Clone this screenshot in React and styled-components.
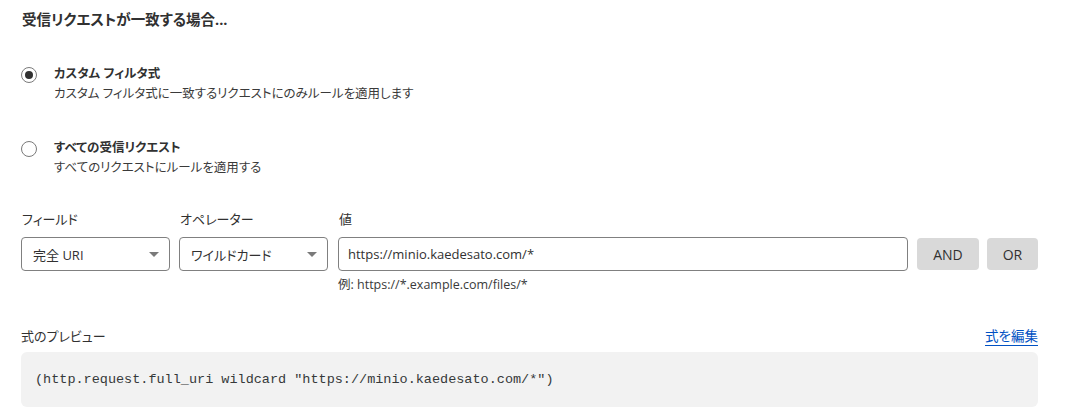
import React from 'react';
import styled, { createGlobalStyle } from 'styled-components';

const GlobalStyle = createGlobalStyle`
    body {
        margin: 0;
        background: #ffffff;
        font-family: "Open Sans", "Noto Sans CJK JP", sans-serif;
        color: #313131;
    }
`;

const Page = styled.div`
    padding: 10px 40px 0 21px;
    font-feature-settings: "palt";
`;

const Title = styled.h2`
    margin: 0 0 0 1px;
    font-size: 14.5px;
    line-height: 20px;
    font-weight: 700;
    color: #313131;
`;

const RadioList = styled.div`
    display: flex;
    flex-direction: column;
    gap: 34px;
    margin-top: 34px;
`;

const RadioRow = styled.label`
    display: flex;
    gap: 17px;
    cursor: pointer;
`;

const RadioCircle = styled.span`
    flex: none;
    width: 16px;
    height: 16px;
    margin-top: 3px;
    box-sizing: border-box;
    border: 1px solid #7a7a7a;
    border-radius: 50%;
    display: flex;
    align-items: center;
    justify-content: center;
    &::after {
        content: "";
        width: 8px;
        height: 8px;
        border-radius: 50%;
        background: ${p => (p.checked ? '#313131' : 'transparent')};
    }
`;

const RadioText = styled.div`
    display: flex;
    flex-direction: column;
`;

const RadioLabel = styled.span`
    font-size: 12.5px;
    line-height: 20px;
    font-weight: 700;
`;

const RadioDesc = styled.span`
    font-size: 12.5px;
    line-height: 20px;
    color: #3a3a3a;
`;

const FieldRow = styled.div`
    display: flex;
    align-items: flex-start;
    margin-top: 31px;
`;

const FieldCol = styled.div`
    display: flex;
    flex-direction: column;
    width: ${p => p.width}px;
    margin-right: ${p => p.gap || 0}px;
`;

const FieldLabel = styled.span`
    font-size: 13px;
    line-height: 20px;
    margin: 0 0 8px 1px;
`;

const SelectBox = styled.div`
    height: 34px;
    box-sizing: border-box;
    border: 1px solid #808080;
    border-radius: 4px;
    display: flex;
    align-items: center;
    justify-content: space-between;
    padding: 0 10px 0 11px;
    font-size: 13px;
    background: #fff;
    &::after {
        content: "";
        border-left: 5px solid transparent;
        border-right: 5px solid transparent;
        border-top: 5px solid #7a7a7a;
    }
`;

const TextInput = styled.div`
    height: 34px;
    box-sizing: border-box;
    border: 1px solid #808080;
    border-radius: 4px;
    display: flex;
    align-items: center;
    padding: 0 9px;
    font-size: 13px;
`;

const Hint = styled.span`
    font-size: 12.5px;
    line-height: 20px;
    margin-top: 4px;
    color: #3a3a3a;
`;

const ButtonGroup = styled.div`
    display: flex;
    gap: 8px;
    margin: 29px 0 0 9px;
`;

const OpButton = styled.button`
    width: ${p => p.width}px;
    height: 32px;
    padding: 0;
    border: 0;
    border-radius: 4px;
    background: #d9d9d9;
    color: #313131;
    font-family: inherit;
    font-size: 14px;
    cursor: pointer;
`;

const PreviewHead = styled.div`
    display: flex;
    justify-content: space-between;
    align-items: center;
    margin-top: 31px;
    font-size: 13px;
    line-height: 20px;
`;

const EditLink = styled.a`
    color: #0051c3;
    font-size: 13.5px;
    text-decoration: underline;
    text-underline-offset: 4px;
    cursor: pointer;
`;

const PreviewBox = styled.div`
    margin-top: 6px;
    height: 55px;
    box-sizing: border-box;
    border-radius: 6px;
    background: #f2f2f2;
    display: flex;
    align-items: center;
    padding: 0 14px;
    font-family: "Liberation Mono", "Noto Sans CJK JP", monospace;
    font-size: 13.5px;
    color: #36393a;
`;

export default function App() {
    return (
        <Page>
            <GlobalStyle />
            <Title>受信リクエストが一致する場合...</Title>
            <RadioList>
                <RadioRow>
                    <RadioCircle checked />
                    <RadioText>
                        <RadioLabel>カスタム フィルタ式</RadioLabel>
                        <RadioDesc>カスタム フィルタ式に一致するリクエストにのみルールを適用します</RadioDesc>
                    </RadioText>
                </RadioRow>
                <RadioRow>
                    <RadioCircle />
                    <RadioText>
                        <RadioLabel>すべての受信リクエスト</RadioLabel>
                        <RadioDesc>すべてのリクエストにルールを適用する</RadioDesc>
                    </RadioText>
                </RadioRow>
            </RadioList>

            <FieldRow>
                <FieldCol width={149} gap={9}>
                    <FieldLabel>フィールド</FieldLabel>
                    <SelectBox>完全 URI</SelectBox>
                </FieldCol>
                <FieldCol width={149} gap={10}>
                    <FieldLabel>オペレーター</FieldLabel>
                    <SelectBox>ワイルドカード</SelectBox>
                </FieldCol>
                <FieldCol width={570}>
                    <FieldLabel>値</FieldLabel>
                    <TextInput>https://minio.kaedesato.com/*</TextInput>
                    <Hint>例: https://*.example.com/files/*</Hint>
                </FieldCol>
                <ButtonGroup>
                    <OpButton width={62}>AND</OpButton>
                    <OpButton width={51}>OR</OpButton>
                </ButtonGroup>
            </FieldRow>

            <PreviewHead>
                <span>式のプレビュー</span>
                <EditLink>式を編集</EditLink>
            </PreviewHead>
            <PreviewBox>(http.request.full_uri wildcard "https://minio.kaedesato.com/*")</PreviewBox>
        </Page>
    );
}
